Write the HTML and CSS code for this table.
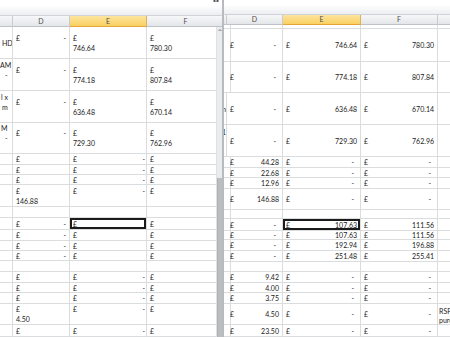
FILE: index.html
```html
<!DOCTYPE html>
<html lang="en">
<head>
<meta charset="utf-8">
<title>Sheet</title>
<link rel="stylesheet" href="styles.css">
</head>
<body>
<div class="screen">
  <section class="win win-left">
    <div class="topbar"><svg class="grip" width="6" height="3" viewBox="0 0 6 3"><rect x="0.5" y="0" width="2" height="2" fill="#555"/><rect x="3.5" y="0" width="2" height="2" fill="#555"/></svg></div>
    <div class="pane">
      <div class="sheet">
        <div class="grid grid-left">
          <div class="h"></div><div class="h">D</div><div class="h sel">E</div><div class="h">F</div>

          <div class="c a"><div class="ln i2">HD</div></div>
          <div class="c"><div class="ln"><span>£</span><span class="d">-</span></div><div class="ln"></div></div>
          <div class="c"><div class="ln">£</div><div class="ln">746.64</div></div>
          <div class="c"><div class="ln">£</div><div class="ln">780.30</div></div>

          <div class="c a"><div class="ln i0">AM</div><div class="ln i5">-</div><div class="ln"></div></div>
          <div class="c"><div class="ln"><span>£</span><span class="d">-</span></div><div class="ln"></div></div>
          <div class="c"><div class="ln">£</div><div class="ln">774.18</div></div>
          <div class="c"><div class="ln">£</div><div class="ln">807.84</div></div>

          <div class="c a"><div class="ln i1">l x</div><div class="ln i2">m</div><div class="ln"></div></div>
          <div class="c"><div class="ln"><span>£</span><span class="d">-</span></div><div class="ln"></div></div>
          <div class="c"><div class="ln">£</div><div class="ln">636.48</div></div>
          <div class="c"><div class="ln">£</div><div class="ln">670.14</div></div>

          <div class="c a"><div class="ln i1">M</div><div class="ln i5">-</div><div class="ln"></div></div>
          <div class="c"><div class="ln"><span>£</span><span class="d">-</span></div><div class="ln"></div></div>
          <div class="c"><div class="ln">£</div><div class="ln">729.30</div></div>
          <div class="c"><div class="ln">£</div><div class="ln">762.96</div></div>

          <div class="c"></div><div class="c"><div class="ln">£</div></div><div class="c"><div class="ln"><span>£</span><span class="de">-</span></div></div><div class="c"><div class="ln">£</div></div>
          <div class="c"></div><div class="c"><div class="ln">£</div></div><div class="c"><div class="ln"><span>£</span><span class="de">-</span></div></div><div class="c"><div class="ln">£</div></div>
          <div class="c"></div><div class="c"><div class="ln">£</div></div><div class="c"><div class="ln"><span>£</span><span class="de">-</span></div></div><div class="c"><div class="ln">£</div></div>

          <div class="c"></div>
          <div class="c"><div class="ln">£</div><div class="ln">146.88</div></div>
          <div class="c"><div class="ln"><span>£</span><span class="de">-</span></div><div class="ln"></div></div>
          <div class="c"><div class="ln">£</div><div class="ln"></div></div>

          <div class="c"></div><div class="c"></div><div class="c"></div><div class="c"></div>

          <div class="c"></div><div class="c"><div class="ln"><span>£</span><span class="d">-</span></div></div><div class="c selected"><div class="ln">£</div></div><div class="c"><div class="ln">£</div></div>
          <div class="c"></div><div class="c"><div class="ln"><span>£</span><span class="d">-</span></div></div><div class="c"><div class="ln">£</div></div><div class="c"><div class="ln">£</div></div>
          <div class="c"></div><div class="c"><div class="ln"><span>£</span><span class="d">-</span></div></div><div class="c"><div class="ln">£</div></div><div class="c"><div class="ln">£</div></div>
          <div class="c"></div><div class="c"><div class="ln"><span>£</span><span class="d">-</span></div></div><div class="c"><div class="ln">£</div></div><div class="c"><div class="ln">£</div></div>

          <div class="c"></div><div class="c"></div><div class="c"></div><div class="c"></div>

          <div class="c"></div><div class="c"><div class="ln">£</div></div><div class="c"><div class="ln"><span>£</span><span class="de">-</span></div></div><div class="c"><div class="ln">£</div></div>
          <div class="c"></div><div class="c"><div class="ln">£</div></div><div class="c"><div class="ln"><span>£</span><span class="de">-</span></div></div><div class="c"><div class="ln">£</div></div>
          <div class="c"></div><div class="c"><div class="ln">£</div></div><div class="c"><div class="ln"><span>£</span><span class="de">-</span></div></div><div class="c"><div class="ln">£</div></div>

          <div class="c"></div>
          <div class="c"><div class="ln">£</div><div class="ln">4.50</div></div>
          <div class="c"><div class="ln"><span>£</span><span class="de">-</span></div><div class="ln"></div></div>
          <div class="c"><div class="ln">£</div><div class="ln"></div></div>

          <div class="c"></div><div class="c"><div class="ln">£</div></div><div class="c"><div class="ln"><span>£</span><span class="de">-</span></div></div><div class="c"><div class="ln">£</div></div>
        </div>
      </div>
      <div class="vscroll">
        <div class="vs-cap"></div>
        <div class="vs-track">
          <svg class="vs-arrow" width="6" height="6" viewBox="0 0 6 6"><path d="M1.5 4 L3 2.5 L4.5 4" fill="none" stroke="#6d6d6d" stroke-width="0.9"/></svg>
          <div class="vs-thumb"></div>
        </div>
      </div>
    </div>
  </section>

  <div class="divider"></div>

  <section class="win win-right">
    <div class="topbar"></div>
    <div class="sheet">
      <div class="grid grid-right">
        <div class="h"></div><div class="h">D</div><div class="h sel">E</div><div class="h">F</div><div class="h"></div>
        <div class="c"></div><div class="c"></div><div class="c"></div><div class="c"></div><div class="c"></div>

        <div class="c"></div>
        <div class="c"><div class="ln"><span>£</span><span class="d">-</span></div></div>
        <div class="c"><div class="ln"><span>£</span><span>746.64</span></div></div>
        <div class="c"><div class="ln"><span>£</span><span>780.30</span></div></div>
        <div class="c"></div>

        <div class="c"></div>
        <div class="c"><div class="ln"><span>£</span><span class="d">-</span></div></div>
        <div class="c"><div class="ln"><span>£</span><span>774.18</span></div></div>
        <div class="c"><div class="ln"><span>£</span><span>807.84</span></div></div>
        <div class="c"></div>

        <div class="c frag"><div class="ln">m</div></div>
        <div class="c"><div class="ln"><span>£</span><span class="d">-</span></div></div>
        <div class="c"><div class="ln"><span>£</span><span>636.48</span></div></div>
        <div class="c"><div class="ln"><span>£</span><span>670.14</span></div></div>
        <div class="c"></div>

        <div class="c frag top"><div class="ln">1</div></div>
        <div class="c"><div class="ln"><span>£</span><span class="d">-</span></div></div>
        <div class="c"><div class="ln"><span>£</span><span>729.30</span></div></div>
        <div class="c"><div class="ln"><span>£</span><span>762.96</span></div></div>
        <div class="c"></div>

        <div class="c"></div><div class="c"><div class="ln"><span>£</span><span>44.28</span></div></div><div class="c"><div class="ln"><span>£</span><span class="d">-</span></div></div><div class="c"><div class="ln"><span>£</span><span class="d">-</span></div></div><div class="c"></div>
        <div class="c"></div><div class="c"><div class="ln"><span>£</span><span>22.68</span></div></div><div class="c"><div class="ln"><span>£</span><span class="d">-</span></div></div><div class="c"><div class="ln"><span>£</span><span class="d">-</span></div></div><div class="c"></div>
        <div class="c"></div><div class="c"><div class="ln"><span>£</span><span>12.96</span></div></div><div class="c"><div class="ln"><span>£</span><span class="d">-</span></div></div><div class="c"><div class="ln"><span>£</span><span class="d">-</span></div></div><div class="c"></div>
        <div class="c"></div><div class="c"><div class="ln"><span>£</span><span>146.88</span></div></div><div class="c"><div class="ln"><span>£</span><span class="d">-</span></div></div><div class="c"><div class="ln"><span>£</span><span class="d">-</span></div></div><div class="c"></div>

        <div class="c"></div><div class="c"></div><div class="c"></div><div class="c"></div><div class="c"></div>

        <div class="c"></div><div class="c"><div class="ln"><span>£</span><span class="d">-</span></div></div><div class="c selected"><div class="ln"><span>£</span><span>107.63</span></div></div><div class="c"><div class="ln"><span>£</span><span>111.56</span></div></div><div class="c"></div>
        <div class="c"></div><div class="c"><div class="ln"><span>£</span><span class="d">-</span></div></div><div class="c"><div class="ln"><span>£</span><span>107.63</span></div></div><div class="c"><div class="ln"><span>£</span><span>111.56</span></div></div><div class="c"></div>
        <div class="c"></div><div class="c"><div class="ln"><span>£</span><span class="d">-</span></div></div><div class="c"><div class="ln"><span>£</span><span>192.94</span></div></div><div class="c"><div class="ln"><span>£</span><span>196.88</span></div></div><div class="c"></div>
        <div class="c"></div><div class="c"><div class="ln"><span>£</span><span class="d">-</span></div></div><div class="c"><div class="ln"><span>£</span><span>251.48</span></div></div><div class="c"><div class="ln"><span>£</span><span>255.41</span></div></div><div class="c"></div>

        <div class="c"></div><div class="c"></div><div class="c"></div><div class="c"></div><div class="c"></div>

        <div class="c"></div><div class="c"><div class="ln"><span>£</span><span>9.42</span></div></div><div class="c"><div class="ln"><span>£</span><span class="d">-</span></div></div><div class="c"><div class="ln"><span>£</span><span class="d">-</span></div></div><div class="c"></div>
        <div class="c"></div><div class="c"><div class="ln"><span>£</span><span>4.00</span></div></div><div class="c"><div class="ln"><span>£</span><span class="d">-</span></div></div><div class="c"><div class="ln"><span>£</span><span class="d">-</span></div></div><div class="c"></div>
        <div class="c"></div><div class="c"><div class="ln"><span>£</span><span>3.75</span></div></div><div class="c"><div class="ln"><span>£</span><span class="d">-</span></div></div><div class="c"><div class="ln"><span>£</span><span class="d">-</span></div></div><div class="c"></div>
        <div class="c"></div><div class="c"><div class="ln"><span>£</span><span>4.50</span></div></div><div class="c"><div class="ln"><span>£</span><span class="d">-</span></div></div><div class="c"><div class="ln"><span>£</span><span class="d">-</span></div></div><div class="c note"><div class="ln">RSP price</div><div class="ln">purchase</div></div>
        <div class="c"></div><div class="c"><div class="ln"><span>£</span><span>23.50</span></div></div><div class="c"><div class="ln"><span>£</span><span class="d">-</span></div></div><div class="c"><div class="ln"><span>£</span><span class="d">-</span></div></div><div class="c"></div>
      </div>
    </div>
  </section>
</div>
</body>
</html>
```

FILE: styles.css
```css
* { box-sizing: border-box; margin: 0; padding: 0; }
html, body { width: 450px; height: 337px; overflow: hidden; background: #fff; }
body {
  font-family: Lato, "Liberation Sans", sans-serif;
  font-size: 7px;
  color: #1a1a1a;
}
.screen { display: flex; width: 450px; height: 337px; }
.win { display: flex; flex-direction: column; overflow: hidden; height: 337px; }
.win-left { width: 222px; flex: none; }
.win-right { flex: 1; min-width: 0; }
.divider { width: 2px; flex: none; background: #b7babe; }

.topbar {
  flex: none;
  background: linear-gradient(#ffffff, #ffffff 35%, #eceef1);
  border-bottom: 1px solid #cfd3d8;
  display: flex;
  justify-content: flex-end;
  align-items: flex-start;
}
.win-left .topbar { height: 16px; padding-right: 3px; }
.win-right .topbar { height: 15px; }
.grip { display: block; }

.pane { display: flex; flex: 1; min-height: 0; }
.sheet { flex: 1; overflow: hidden; min-width: 0; }

.grid { display: grid; }
.grid-left {
  grid-template-columns: 13px 57px 77px 78px;
  grid-template-rows: 11px 32px 32px 32px 31px 11px 10px 10px 22px 11px 12px 11px 10px 10px 11px 11px 10px 11px 21px 12px;
}
.grid-right {
  grid-template-columns: 3px 56px 78px 77px 40px;
  grid-template-rows: 10px 4px 33px 31px 32px 32px 11px 10px 11px 21px 9px 12px 9px 11px 11px 10px 11px 10px 11px 21px 12px;
}

.h {
  background: linear-gradient(#f6f7f8, #e3e6e9);
  border-right: 1px solid #c8ccd1;
  border-bottom: 1px solid #bfc3c8;
  color: #4d4d4d;
  text-align: center;
  line-height: 10px;
  font-size: 7px;
}
.grid-right .h { line-height: 9px; }
.h.sel {
  background: linear-gradient(#fde49e, #f9d061);
  border-bottom-color: #e3a53a;
  border-right-color: #dcb25c;
}

.c {
  border-right: 1px solid #dadcdd;
  border-bottom: 1px solid #dadcdd;
  display: flex;
  flex-direction: column;
  justify-content: center;
  padding: 0 3px;
  overflow: hidden;
  min-width: 0;
}
.ln {
  display: flex;
  justify-content: space-between;
  height: 10px;
  line-height: 10px;
  white-space: nowrap;
  flex: none;
}
.d { margin-right: 3px; }
.win-left .d { margin-right: 0; }
.de { margin-right: -2px; }

.c.a { padding: 0; }
.i0 { padding-left: 0; }
.i1 { padding-left: 1px; }
.i2 { padding-left: 2px; }
.i5 { padding-left: 5px; }

.c.frag { padding: 0; align-items: flex-end; }
.c.frag.top { justify-content: flex-start; padding-top: 2px; }
.c.note { padding: 3px 1px 0; justify-content: flex-start; }
.c.note .ln { height: 9px; line-height: 9px; }

.selected { box-shadow: inset 0 0 0 2px #1b1b1b; }

.vscroll { width: 6px; flex: none; display: flex; flex-direction: column; }
.vs-cap {
  height: 11px;
  flex: none;
  background: linear-gradient(#f6f7f8, #e3e6e9);
  border-bottom: 1px solid #bfc3c8;
}
.vs-track {
  flex: 1;
  display: flex;
  flex-direction: column;
  background: #eaebed;
  border-left: 1px solid #dfe1e3;
}
.vs-arrow { display: block; flex: none; }
.vs-thumb {
  margin-top: 145px;
  flex: 1;
  background: #bcbdbf;
  border-left: 1px solid #aeb0b2;
}
```
